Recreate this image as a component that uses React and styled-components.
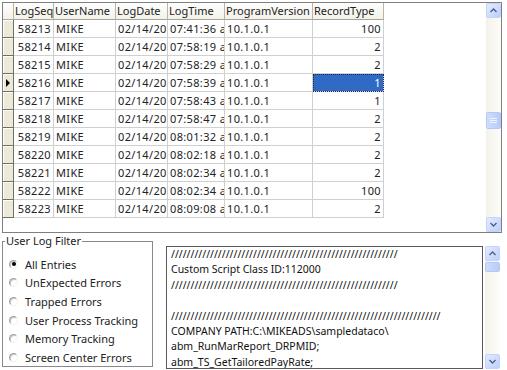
import React from "react";
import styled, { createGlobalStyle } from "styled-components";

const GlobalStyle = createGlobalStyle`
  html, body {
    margin: 0;
    padding: 0;
    background: #fff;
  }
  body {
    font-family: "Noto Sans", "Liberation Sans", Arial, sans-serif;
    font-size: 11px;
    color: #222;
  }
`;

//#region layout
const Screen = styled.div`
  width: 507px;
  height: 370px;
  overflow: hidden;
  display: flex;
  flex-direction: column;
`;

const Grid = styled.div`
  margin: 2px 0 0 2px;
  width: 500px;
  height: 231px;
  box-sizing: border-box;
  border: 1px solid #7f7f7f;
  display: flex;
  background: #fff;
`;

const Table = styled.div`
  flex: 1;
  display: flex;
  flex-direction: column;
`;

const Row = styled.div`
  display: flex;
  height: ${(p) => (p.$header ? 17 : 18)}px;
  line-height: ${(p) => (p.$header ? 16 : 17)}px;
`;

const HeadCell = styled.div`
  box-sizing: border-box;
  width: ${(p) => p.$w}px;
  padding-left: 1px;
  background: linear-gradient(#fefefd, #f3f1ea);
  border-right: 1px solid #b9b6a8;
  border-bottom: 1px solid #a8a597;
  white-space: nowrap;
  overflow: hidden;
`;

const RowHead = styled.div`
  box-sizing: border-box;
  width: 11px;
  position: relative;
  background: #ece9d8;
  border-right: 1px solid #716f64;
  border-bottom: 1px solid #716f64;
  box-shadow: inset 1px 1px 0 #fff;
`;

const Pointer = styled.span`
  position: absolute;
  left: 3px;
  top: 5px;
  width: 0;
  height: 0;
  border-top: 4px solid transparent;
  border-bottom: 4px solid transparent;
  border-left: 4px solid #000;
`;

const Cell = styled.div`
  box-sizing: border-box;
  width: ${(p) => p.$w}px;
  padding: 0 2px;
  letter-spacing: 0.35px;
  text-align: ${(p) => (p.$right ? "right" : "left")};
  border-right: 1px solid #d0d0d0;
  border-bottom: 1px solid #d0d0d0;
  white-space: nowrap;
  overflow: hidden;
  background: ${(p) => (p.$selected ? "#316ac5" : "transparent")};
  color: ${(p) => (p.$selected ? "#fff" : "inherit")};
  outline: ${(p) => (p.$selected ? "1px dotted #1b2a4a" : "none")};
  outline-offset: -1px;
`;
//#endregion layout

//#region scroll bars
const ScrollBar = styled.div`
  width: 15px;
  height: ${(p) => p.$h}px;
  display: flex;
  flex-direction: column;
  background: linear-gradient(90deg, #f3f1ea, #fdfdfa);
`;

const ScrollButton = styled.div`
  box-sizing: border-box;
  height: 15px;
  border: 1px solid #c3d3fd;
  border-radius: 2px;
  background: linear-gradient(135deg, #e3ebff, #bccffb);
  display: flex;
  align-items: center;
  justify-content: center;
`;

const Track = styled.div`
  flex: 1;
  position: relative;
`;

const Thumb = styled.div`
  position: absolute;
  left: 0;
  right: 0;
  top: ${(p) => p.$top}px;
  height: ${(p) => p.$h}px;
  box-sizing: border-box;
  border: 1px solid #b4c8f6;
  border-radius: 2px;
  background: linear-gradient(90deg, #cfdcfd, #b8cbf9);
  display: flex;
  align-items: center;
  justify-content: center;
`;

const Chevron = ({ down }) => (
  <svg width="7" height="5" viewBox="0 0 7 5">
    <path
      d={down ? "M0.5 1 L3.5 4 L6.5 1" : "M0.5 4 L3.5 1 L6.5 4"}
      fill="none"
      stroke="#4d6185"
      strokeWidth="1.4"
    />
  </svg>
);

const Grip = () => (
  <svg width="7" height="6" viewBox="0 0 7 6">
    <path d="M0 0.5h7M0 2.5h7M0 4.5h7" stroke="#eef3ff" strokeWidth="1" />
  </svg>
);

const VScroll = ({ height, thumbTop, thumbHeight }) => (
  <ScrollBar $h={height}>
    <ScrollButton>
      <Chevron />
    </ScrollButton>
    <Track>
      <Thumb $top={thumbTop} $h={thumbHeight}>
        {thumbHeight > 12 && <Grip />}
      </Thumb>
    </Track>
    <ScrollButton>
      <Chevron down />
    </ScrollButton>
  </ScrollBar>
);
//#endregion scroll bars

//#region bottom area
const Bottom = styled.div`
  display: flex;
  align-items: flex-start;
  margin-top: 2px;
`;

const GroupBox = styled.fieldset`
  box-sizing: border-box;
  margin: 0 0 0 2px;
  width: 151px;
  height: 132px;
  padding: 8px 0 0 2px;
  border: 1px solid #8a8a8a;
  font-size: 11px;
`;

const GroupLegend = styled.legend`
  padding: 0 1px;
  line-height: 12px;
  color: #222;
`;

const RadioRow = styled.label`
  display: flex;
  align-items: center;
  height: 18.6px;
  padding-left: 4px;
  gap: 7px;
  white-space: nowrap;
`;

const RadioDot = styled.span`
  box-sizing: border-box;
  width: 9px;
  height: 9px;
  border-radius: 50%;
  border: 1px solid;
  border-color: #a0a0a0 #f0f0f0 #f0f0f0 #a0a0a0;
  box-shadow: inset 1px 1px 0 #c4c4c4;
  background: #fff;
  display: flex;
  align-items: center;
  justify-content: center;
  &::after {
    content: "";
    width: 4px;
    height: 4px;
    border-radius: 50%;
    background: ${(p) => (p.$on ? "#000" : "transparent")};
  }
`;

const LogPane = styled.div`
  display: flex;
  align-items: flex-start;
  margin: 11px 0 0 13px;
  gap: 2px;
`;

const LogText = styled.div`
  box-sizing: border-box;
  width: 317px;
  height: 123px;
  border: 1px solid #5a5a5a;
  padding: 0 0 0 4px;
  overflow: hidden;
  font-size: 10.5px;
  line-height: 15.4px;
  color: #111;
  white-space: pre;
`;
//#endregion bottom area

const columns = [
  { key: "seq", title: "LogSeq", w: 40, right: true },
  { key: "user", title: "UserName", w: 62 },
  { key: "date", title: "LogDate", w: 52 },
  { key: "time", title: "LogTime", w: 57 },
  { key: "ver", title: "ProgramVersion", w: 88 },
  { key: "type", title: "RecordType", w: 71, right: true },
];

const times = [
  ["58213", "07:41:36", "100"],
  ["58214", "07:58:19", "2"],
  ["58215", "07:58:29", "2"],
  ["58216", "07:58:39", "1"],
  ["58217", "07:58:43", "1"],
  ["58218", "07:58:47", "2"],
  ["58219", "08:01:32", "2"],
  ["58220", "08:02:18", "2"],
  ["58221", "08:02:34", "2"],
  ["58222", "08:02:34", "100"],
  ["58223", "08:09:08", "2"],
];

const rows = times.map(([seq, time, type]) => ({
  seq,
  user: "MIKE",
  date: "02/14/2013",
  time: time + " am",
  ver: "10.1.0.1",
  type,
}));

const filters = [
  "All Entries",
  "UnExpected Errors",
  "Trapped Errors",
  "User Process Tracking",
  "Memory Tracking",
  "Screen Center Errors",
];

const logLines = [
  "/".repeat(58),
  "Custom Script Class ID:112000",
  "/".repeat(58),
  "",
  "/".repeat(69),
  "COMPANY PATH:C:\\MIKEADS\\sampledataco\\",
  "abm_RunMarReport_DRPMID;",
  "abm_TS_GetTailoredPayRate;",
];

const App = () => {
  const current = 3;
  return (
    <Screen>
      <GlobalStyle />
      <Grid>
        <Table>
          <Row $header>
            <HeadCell $w={11} />
            {columns.map((c) => (
              <HeadCell key={c.key} $w={c.w}>
                {c.title}
              </HeadCell>
            ))}
          </Row>
          {rows.map((r, i) => (
            <Row key={r.seq}>
              <RowHead>{i === current && <Pointer />}</RowHead>
              {columns.map((c) => (
                <Cell
                  key={c.key}
                  $w={c.w}
                  $right={c.right}
                  $selected={i === current && c.key === "type"}
                >
                  {r[c.key]}
                </Cell>
              ))}
            </Row>
          ))}
        </Table>
        <VScroll height={229} thumbTop={94} thumbHeight={17} />
      </Grid>
      <Bottom>
        <GroupBox>
          <GroupLegend>User Log Filter</GroupLegend>
          {filters.map((f, i) => (
            <RadioRow key={f}>
              <RadioDot $on={i === 0} />
              {f}
            </RadioRow>
          ))}
        </GroupBox>
        <LogPane>
          <LogText>{logLines.join("\n")}</LogText>
          <VScroll height={123} thumbTop={1} thumbHeight={10} />
        </LogPane>
      </Bottom>
    </Screen>
  );
};

export default App;
